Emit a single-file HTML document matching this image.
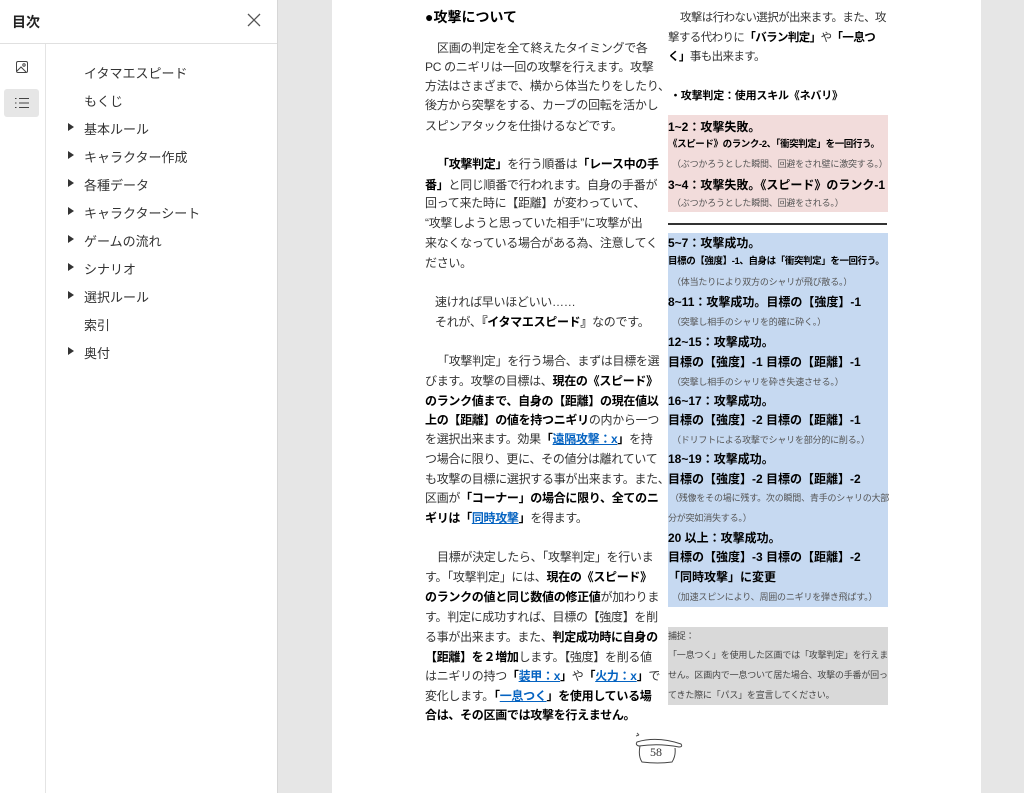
<!DOCTYPE html>
<html><head><meta charset="utf-8"><style>
*{margin:0;padding:0;box-sizing:border-box}
body{width:1024px;height:793px;overflow:hidden;background:#e6e6e6;font-family:"Liberation Sans","Noto Sans CJK JP",sans-serif;position:relative}
#side{position:absolute;left:0;top:0;width:278px;height:793px;background:#fff;border-right:1px solid #d6d6d6}
#hdr{position:absolute;left:0;top:0;width:277px;height:44px;border-bottom:1px solid #e0e0e0}
#hdr .t{position:absolute;left:12px;top:12px;font-size:14px;font-weight:bold;color:#222}
#icons{position:absolute;left:0;top:44px;width:46px;height:749px;border-right:1px solid #e4e4e4}
.it{position:absolute;font-size:13px;color:#333;white-space:nowrap}
.tri{position:absolute;width:0;height:0;border-left:6px solid #333;border-top:4px solid transparent;border-bottom:4px solid transparent}
#page{position:absolute;left:332px;top:0;width:649px;height:793px;background:#fff}
.L{position:absolute;font-size:12px;line-height:18px;height:18px;white-space:nowrap;color:#333;letter-spacing:-0.3px}
.R{font-size:11.5px;letter-spacing:-0.6px}
.b{font-weight:bold;color:#000}
.a{color:#0563c1;text-decoration:underline;font-weight:bold}
.s{font-size:9px;color:#555;letter-spacing:-0.2px}
.m{font-size:9.5px;font-weight:bold;color:#000;letter-spacing:-0.4px}
.g{font-size:9px;color:#444;letter-spacing:-0.2px}
</style></head><body>
<div id="side">
 <div id="hdr"><div class="t">目次</div>
  <svg style="position:absolute;left:247px;top:13px" width="14" height="14" viewBox="0 0 14 14"><path d="M1 1L13 13M13 1L1 13" stroke="#555" stroke-width="1.3"/></svg>
 </div>
 <div id="icons">
  <svg style="position:absolute;left:16px;top:17px" width="12" height="12" viewBox="0 0 12 12"><rect x="0.5" y="0.5" width="11" height="11" rx="1.5" fill="none" stroke="#444"/><path d="M1 10L5 6L10 11" fill="none" stroke="#444"/><circle cx="8" cy="4" r="1.2" fill="none" stroke="#444"/></svg>
  <div style="position:absolute;left:4px;top:45px;width:35px;height:28px;background:#e6e6e6;border-radius:3px"></div>
  <svg style="position:absolute;left:15px;top:53px" width="14" height="12" viewBox="0 0 14 12"><g stroke="#444" stroke-width="1"><path d="M0 1.5h1.5M0 6h1.5M0 10.5h1.5M4 1.5h10M4 6h10M4 10.5h10"/></g></svg>
 </div>
 <div class="it" style="left:84px;top:63px">イタマエスピード</div>
 <div class="it" style="left:84px;top:91px">もくじ</div>
 <div class="tri" style="left:68px;top:123px"></div><div class="it" style="left:84px;top:119px">基本ルール</div>
 <div class="tri" style="left:68px;top:151px"></div><div class="it" style="left:84px;top:147px">キャラクター作成</div>
 <div class="tri" style="left:68px;top:179px"></div><div class="it" style="left:84px;top:175px">各種データ</div>
 <div class="tri" style="left:68px;top:207px"></div><div class="it" style="left:84px;top:203px">キャラクターシート</div>
 <div class="tri" style="left:68px;top:235px"></div><div class="it" style="left:84px;top:231px">ゲームの流れ</div>
 <div class="tri" style="left:68px;top:263px"></div><div class="it" style="left:84px;top:259px">シナリオ</div>
 <div class="tri" style="left:68px;top:291px"></div><div class="it" style="left:84px;top:287px">選択ルール</div>
 <div class="it" style="left:84px;top:315px">索引</div>
 <div class="tri" style="left:68px;top:347px"></div><div class="it" style="left:84px;top:343px">奥付</div>
</div>
<div id="page"></div>
<!-- left column -->
<div class="L b" style="left:425px;top:8px;font-size:14px;letter-spacing:0">●攻撃について</div>
<div class="L" style="left:437px;top:39px">区画の判定を全て終えたタイミングで各</div>
<div class="L" style="left:425px;top:58px">PC のニギリは一回の攻撃を行えます。攻撃</div>
<div class="L" style="left:425px;top:77px">方法はさまざまで、横から体当たりをしたり、</div>
<div class="L" style="left:425px;top:96px">後方から突撃をする、カーブの回転を活かし</div>
<div class="L" style="left:425px;top:117px">スピンアタックを仕掛けるなどです。</div>
<div class="L" style="left:437px;top:155px"><span class="b">「攻撃判定」</span>を行う順番は<span class="b">「レース中の手</span></div>
<div class="L" style="left:425px;top:176px"><span class="b">番」</span>と同じ順番で行われます。自身の手番が</div>
<div class="L" style="left:425px;top:194px">回って来た時に【距離】が変わっていて、</div>
<div class="L" style="left:425px;top:214px">“攻撃しようと思っていた相手”に攻撃が出</div>
<div class="L" style="left:425px;top:234px">来なくなっている場合がある為、注意してく</div>
<div class="L" style="left:425px;top:254px">ださい。</div>
<div class="L" style="left:435px;top:293px">速ければ早いほどいい……</div>
<div class="L" style="left:435px;top:313px">それが、<span class="b">『イタマエスピード』</span>なのです。</div>
<div class="L" style="left:437px;top:352px">「攻撃判定」を行う場合、まずは目標を選</div>
<div class="L" style="left:425px;top:372px">びます。攻撃の目標は、<span class="b">現在の《スピード》</span></div>
<div class="L b" style="left:425px;top:392px">のランク値まで、自身の【距離】の現在値以</div>
<div class="L" style="left:425px;top:411px"><span class="b">上の【距離】の値を持つニギリ</span>の内から一つ</div>
<div class="L" style="left:425px;top:430px">を選択出来ます。効果<span class="b">「<span class="a">遠隔攻撃：x</span>」</span>を持</div>
<div class="L" style="left:425px;top:450px">つ場合に限り、更に、その値分は離れていて</div>
<div class="L" style="left:425px;top:470px">も攻撃の目標に選択する事が出来ます。また、</div>
<div class="L" style="left:425px;top:489px">区画が<span class="b">「コーナー」の場合に限り、全てのニ</span></div>
<div class="L" style="left:425px;top:509px"><span class="b">ギリは「<span class="a">同時攻撃</span>」</span>を得ます。</div>
<div class="L" style="left:437px;top:548px">目標が決定したら、「攻撃判定」を行いま</div>
<div class="L" style="left:425px;top:568px">す。「攻撃判定」には、<span class="b">現在の《スピード》</span></div>
<div class="L" style="left:425px;top:588px"><span class="b">のランクの値と同じ数値の修正値</span>が加わりま</div>
<div class="L" style="left:425px;top:608px">す。判定に成功すれば、目標の【強度】を削</div>
<div class="L" style="left:425px;top:628px">る事が出来ます。また、<span class="b">判定成功時に自身の</span></div>
<div class="L" style="left:425px;top:648px"><span class="b">【距離】を２増加</span>します。【強度】を削る値</div>
<div class="L" style="left:425px;top:667px">はニギリの持つ<span class="b">「<span class="a">装甲：x</span>」</span>や<span class="b">「<span class="a">火力：x</span>」</span>で</div>
<div class="L" style="left:425px;top:687px">変化します。<span class="b">「<span class="a">一息つく</span>」を使用している場</span></div>
<div class="L b" style="left:425px;top:706px">合は、その区画では攻撃を行えません。</div>
<svg style="position:absolute;left:633px;top:728px" width="52" height="40" viewBox="0 0 52 40"><path d="M4 5l2 2M3 8l3-1" stroke="#555" fill="none"/><path d="M4 14q20-6 44 2q2 3-2 3q-20-4-40-1q-4-1-2-4z" fill="none" stroke="#444"/><path d="M7 18q-2 10 2 16q16 2 30 0q4-6 3-14" fill="none" stroke="#444"/></svg>
<div style="position:absolute;left:650px;top:745px;font-family:'Liberation Serif',serif;font-size:12px;color:#333">58</div>
<!-- right column -->
<div class="L R" style="left:680px;top:9px">攻撃は行わない選択が出来ます。また、攻</div>
<div class="L R" style="left:668px;top:29px">撃する代わりに<span class="b">「バラン判定」</span>や<span class="b">「一息つ</span></div>
<div class="L R" style="left:668px;top:48px"><span class="b">く」</span>事も出来ます。</div>
<div class="L b" style="left:670px;top:87px;font-size:11px;letter-spacing:-0.2px">・攻撃判定：使用スキル《ネバリ》</div>
<div style="position:absolute;left:668px;top:115px;width:220px;height:97px;background:#f2dcdb"></div>
<div class="L b" style="left:668px;top:118px;letter-spacing:0">1~2：攻撃失敗。</div>
<div class="L m" style="left:668px;top:136px">《スピード》のランク-2、「衝突判定」を一回行う。</div>
<div class="L s" style="left:672px;top:155px">（ぶつかろうとした瞬間、回避をされ壁に激突する。）</div>
<div class="L b" style="left:668px;top:176px;letter-spacing:0">3~4：攻撃失敗。《スピード》のランク-1</div>
<div class="L s" style="left:672px;top:194px">（ぶつかろうとした瞬間、回避をされる。）</div>
<div style="position:absolute;left:668px;top:223px;width:219px;height:2px;background:#333"></div>
<div style="position:absolute;left:668px;top:233px;width:220px;height:374px;background:#c6d9f1"></div>
<div class="L b" style="left:668px;top:234px;letter-spacing:0">5~7：攻撃成功。</div>
<div class="L m" style="left:668px;top:253px">目標の【強度】-1、自身は「衝突判定」を一回行う。</div>
<div class="L s" style="left:672px;top:273px">（体当たりにより双方のシャリが飛び散る。）</div>
<div class="L b" style="left:668px;top:293px;letter-spacing:0">8~11：攻撃成功。目標の【強度】-1</div>
<div class="L s" style="left:672px;top:313px">（突撃し相手のシャリを的確に砕く。）</div>
<div class="L b" style="left:668px;top:333px;letter-spacing:0">12~15：攻撃成功。</div>
<div class="L b" style="left:668px;top:353px;letter-spacing:0">目標の【強度】-1 目標の【距離】-1</div>
<div class="L s" style="left:672px;top:373px">（突撃し相手のシャリを砕き失速させる。）</div>
<div class="L b" style="left:668px;top:392px;letter-spacing:0">16~17：攻撃成功。</div>
<div class="L b" style="left:668px;top:411px;letter-spacing:0">目標の【強度】-2 目標の【距離】-1</div>
<div class="L s" style="left:672px;top:431px">（ドリフトによる攻撃でシャリを部分的に削る。）</div>
<div class="L b" style="left:668px;top:450px;letter-spacing:0">18~19：攻撃成功。</div>
<div class="L b" style="left:668px;top:470px;letter-spacing:0">目標の【強度】-2 目標の【距離】-2</div>
<div class="L s" style="left:670px;top:489px">（残像をその場に残す。次の瞬間、青手のシャリの大部</div>
<div class="L s" style="left:668px;top:509px">分が突如消失する。）</div>
<div class="L b" style="left:668px;top:529px;letter-spacing:0">20 以上：攻撃成功。</div>
<div class="L b" style="left:668px;top:548px;letter-spacing:0">目標の【強度】-3 目標の【距離】-2</div>
<div class="L b" style="left:668px;top:568px;letter-spacing:0">「同時攻撃」に変更</div>
<div class="L s" style="left:672px;top:588px">（加速スピンにより、周囲のニギリを弾き飛ばす。）</div>
<div style="position:absolute;left:668px;top:627px;width:220px;height:78px;background:#d9d9d9"></div>
<div class="L g" style="left:668px;top:627px">捕捉：</div>
<div class="L g" style="left:668px;top:646px">「一息つく」を使用した区画では「攻撃判定」を行えま</div>
<div class="L g" style="left:668px;top:666px">せん。区画内で一息ついて居た場合、攻撃の手番が回っ</div>
<div class="L g" style="left:668px;top:686px">てきた際に「パス」を宣言してください。</div>
</body></html>
